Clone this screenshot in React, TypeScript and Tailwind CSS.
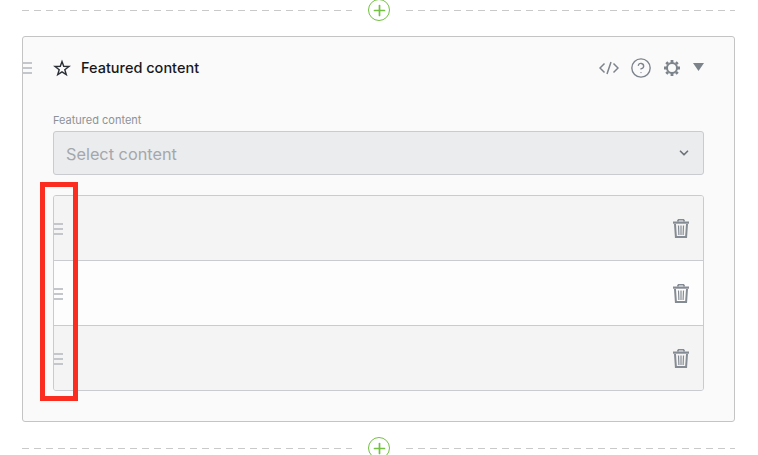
import { ChevronDown, CircleHelp, Plus } from "lucide-react";

const Separator = () => (
  <div className="flex items-center pl-[22px] pr-[23px] h-[22px]">
    <div className="h-px w-[330px] bg-[repeating-linear-gradient(90deg,#c9c9c9_0_7px,transparent_7px_12px)]" />
    <div className="ml-[16px] mr-[16px] flex h-[22px] w-[22px] shrink-0 items-center justify-center rounded-full border-[1.5px] border-[#74c043] bg-white">
      <Plus size={17} strokeWidth={2.4} className="text-[#74c043]" />
    </div>
    <div className="h-px flex-1 bg-[repeating-linear-gradient(90deg,#c9c9c9_0_7px,transparent_7px_12px)]" />
  </div>
);

const Grip = ({ className }: { className: string }) => (
  <div className={`absolute flex w-[9px] flex-col gap-[3px] ${className}`}>
    <div className="h-[2px] bg-[#c3c6ca]" />
    <div className="h-[2px] bg-[#c3c6ca]" />
    <div className="h-[2px] bg-[#c3c6ca]" />
  </div>
);

const Trash = () => (
  <svg width="16" height="19" viewBox="0 0 16 19" className="text-[#858b93]">
    <path d="M4.500 2.500 L5.500 0.800 H10.500 L11.500 2.500" fill="none" stroke="currentColor" strokeWidth="1.600" />
    <rect x="0" y="2.500" width="16" height="2.200" fill="currentColor" />
    <path d="M2 5 L2.900 18 H13.100 L14 5" fill="none" stroke="currentColor" strokeWidth="2" />
    <path d="M5.500 6.500 L5.900 16 M8 6.500 V16 M10.500 6.500 L10.100 16" fill="none" stroke="currentColor" strokeWidth="1.200" />
  </svg>
);

// ring with eight square teeth
const Gear = () => (
  <svg width="18" height="18" viewBox="0 0 18 18" fill="none" stroke="#7d838b">
    <circle cx="9" cy="9" r="5" strokeWidth="2" />
    <path
      strokeWidth="2.800"
      d="M9 1 V4 M9 14 V17 M1 9 H4 M14 9 H17 M3.300 3.300 L5 5 M13 13 L14.700 14.700 M3.300 14.700 L5 13 M13 5 L14.700 3.300"
    />
  </svg>
);

const Row = ({ shaded }: { shaded?: boolean }) => (
  <div
    className={`relative flex h-[65px] items-center justify-end pr-[14px] ${
      shaded ? "bg-[#f4f4f4]" : "bg-[#fdfdfd]"
    }`}
  >
    <Grip className="left-0 top-[27px]" />
    <Trash />
  </div>
);

export default function App() {
  return (
    <div className="relative h-[455px] w-[758px] overflow-hidden bg-white font-['Inter',sans-serif]">
      <div className="-mt-px">
        <Separator />
      </div>

      <div className="relative ml-[22px] mt-[15px] h-[386px] w-[713px] rounded-[3px] border border-[#c4c4c4] bg-[#fafafa] px-[30px]">
        <Grip className="left-0 top-[25px]" />

        <div className="flex h-[61px] items-center">
          <svg width="18" height="18" viewBox="0 0 18 18" fill="none" stroke="#2b2f36" strokeWidth="1.400">
            <path d="M9 2.500 L10.700 7.300 L16 7.500 L11.800 10.700 L13.300 15.600 L9 12.800 L4.700 15.600 L6.200 10.700 L2 7.500 L7.300 7.300 Z" />
          </svg>
          <span className="ml-[10px] text-[14.500px] font-medium text-[#16181c]">Featured content</span>
          <div className="ml-auto flex items-center">
            <svg width="20" height="14" viewBox="0 0 20 14" fill="none" stroke="#7d838b" strokeWidth="1.500" className="mr-[11px]">
              <path d="M5.500 2.500 L1 7 L5.500 11.500 M14.500 2.500 L19 7 L14.500 11.500 M12 1 L8 13" />
            </svg>
            <CircleHelp size={22} strokeWidth={1.500} className="mr-[11px] text-[#7d838b]" />
            <Gear />
            <svg width="11" height="8" viewBox="0 0 11 8" className="ml-[12px] mb-[2px]">
              <path d="M0 0 H11 L5.500 8 Z" fill="#7d838b" />
            </svg>
          </div>
        </div>

        <div className="mt-[14px] text-[11px] leading-[16px] text-[#8d9299]">Featured content</div>
        <div className="mt-[3px] flex h-[44px] items-center justify-between rounded-[3px] border border-[#c9cbce] bg-[#ebecee] pl-[12px] pr-[12px]">
          <span className="pt-[3px] text-[16.300px] text-[#a4a7ab]">Select content</span>
          <ChevronDown size={14} strokeWidth={3} className="text-[#6e737a]" />
        </div>

        <div className="mt-[20px] h-[196px] overflow-hidden rounded-[3px] border border-[#c9cbce] divide-y divide-[#c9cbce]">
          <Row shaded />
          <Row />
          <Row shaded />
        </div>
      </div>

      <div className="mt-[15px]">
        <Separator />
      </div>

      <div className="absolute left-[40px] top-[182px] h-[219px] w-[38px] border-[5px] border-[#fb2d20]" />
    </div>
  );
}
